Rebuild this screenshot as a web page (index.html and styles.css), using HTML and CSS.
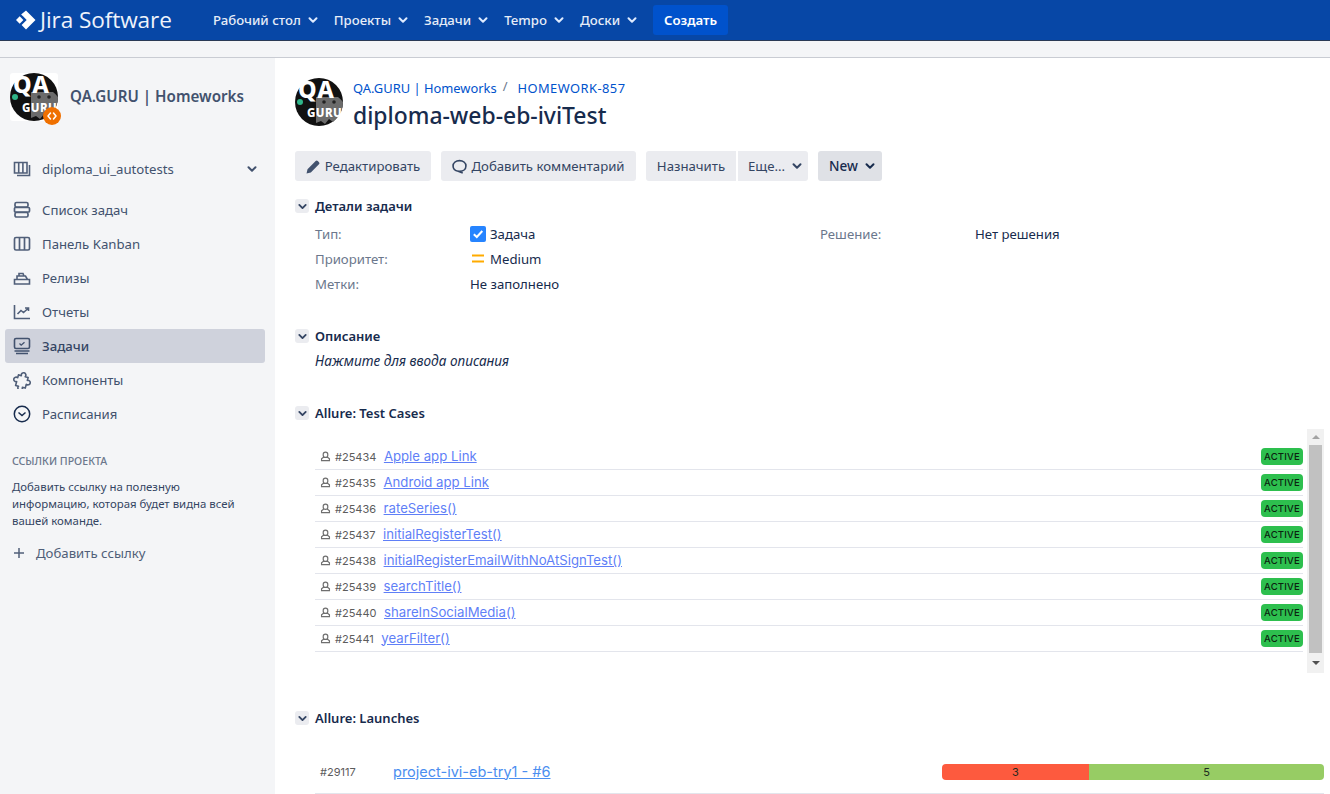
FILE: index.html
```html
<!DOCTYPE html>
<html lang="ru">
<head>
<meta charset="utf-8">
<title>diploma-web-eb-iviTest</title>
<link rel="stylesheet" href="styles.css">
</head>
<body>
<svg class="defs" width="0" height="0" aria-hidden="true">
  <symbol id="chev" viewBox="0 0 12 12">
    <path d="M2.500 4.200 6 7.700l3.500-3.500" fill="none" stroke="currentColor" stroke-width="2" stroke-linecap="round" stroke-linejoin="round"/>
  </symbol>
  <symbol id="person" viewBox="0 0 12 12">
    <path d="M3.500 3.800a2.500 2.500 0 0 1 5 0v.7a2.500 2.500 0 0 1-5 0zM3.800 6.800 1.700 8.400v2.100h8.600V8.400L8.200 6.800" fill="none" stroke="currentColor" stroke-width="1.300"/>
  </symbol>
</svg>

<header class="topbar">
  <a class="brand">
    <svg class="brand-mark" viewBox="0 0 20 20"><path d="M10 0.500 19.500 10 10 19.500 5.600 15.100 10.700 10 7.300 6.600 5.100 4.400z" fill="#fff"/><path d="M3.700 6.300 7.400 10 3.700 13.700 0 10z" fill="#fff"/></svg>
    <span class="brand-text">Jira Software</span>
  </a>
  <nav class="topnav">
    <a class="topnav-item">Рабочий стол<svg class="chev"><use href="#chev"/></svg></a>
    <a class="topnav-item">Проекты<svg class="chev"><use href="#chev"/></svg></a>
    <a class="topnav-item">Задачи<svg class="chev"><use href="#chev"/></svg></a>
    <a class="topnav-item">Tempo<svg class="chev"><use href="#chev"/></svg></a>
    <a class="topnav-item">Доски<svg class="chev"><use href="#chev"/></svg></a>
  </nav>
  <button class="create">Создать</button>
</header>
<div class="subbar"></div>

<div class="layout">
  <aside class="sidebar">
    <div class="project">
      <div class="project-logo">
        <svg class="qa-logo" viewBox="0 0 48 48">
          <circle cx="24" cy="24" r="24" fill="#111"/>
          <path d="M21 45V19h22a24 24 0 0 1 5 5 24 24 0 0 1-7 17l-3 3-4-3-4 5-4-3z" fill="#6b6b6b"/>
          <text x="3" y="19.500" class="logo-qa">QA</text>
          <text x="12" y="38.600" class="logo-guru">GURU</text>
          <circle cx="5" cy="24" r="3" fill="#2fb58a"/>
          <circle cx="29" cy="24" r="1.800" fill="#222"/>
          <circle cx="39" cy="24" r="1.800" fill="#222"/>
        </svg>
        <span class="project-badge"><svg viewBox="0 0 12 12"><path d="M4.500 3 2 6l2.500 3M7.500 3 10 6 7.500 9" fill="none" stroke="#fff" stroke-width="1.500" stroke-linecap="round" stroke-linejoin="round"/></svg></span>
      </div>
      <span class="project-name">QA.GURU | Homeworks</span>
    </div>

    <div class="board-select">
      <svg class="side-icon" viewBox="0 0 18 18"><path d="M1.500 2.500h12.500v10.500H1.500zM5.700 2.500v10.500M9.900 2.500v10.500M16.500 5v10.500H4" fill="none" stroke="#505f79" stroke-width="1.600"/></svg>
      <span class="board-name">diploma_ui_autotests</span>
      <svg class="chev board-chev"><use href="#chev"/></svg>
    </div>

    <ul class="side-nav">
      <li class="side-item">
        <svg class="side-icon" viewBox="0 0 18 18"><rect x="2" y="1.500" width="13" height="4.500" rx="1.500" fill="none" stroke="#505f79" stroke-width="1.700"/><rect x="1.500" y="6.500" width="15" height="4.500" rx="1" fill="none" stroke="#505f79" stroke-width="1.700"/><rect x="2" y="11.500" width="13" height="4.500" rx="1.500" fill="none" stroke="#505f79" stroke-width="1.700"/></svg>
        Список задач</li>
      <li class="side-item">
        <svg class="side-icon" viewBox="0 0 18 18"><rect x="1.500" y="2.500" width="15" height="12.500" rx="1.500" fill="none" stroke="#505f79" stroke-width="1.700"/><path d="M6.500 2.500V15M11.500 2.500V15" stroke="#505f79" stroke-width="1.700"/></svg>
        Панель Kanban</li>
      <li class="side-item">
        <svg class="side-icon" viewBox="0 0 18 18"><path d="M1.500 10.500h15v4.500h-15zM4 10.500V7h8.500l2 3.500M6 7V4.500h4L11 7" fill="none" stroke="#505f79" stroke-width="1.600"/></svg>
        Релизы</li>
      <li class="side-item">
        <svg class="side-icon" viewBox="0 0 18 18"><path d="M1.500 2v13.500h15.500" fill="none" stroke="#505f79" stroke-width="1.600"/><path d="M4.500 11 8 7.500l2.500 2L15 5.500M12 5h3.500v3" fill="none" stroke="#505f79" stroke-width="1.600"/></svg>
        Отчеты</li>
      <li class="side-item side-item-active">
        <svg class="side-icon" viewBox="0 0 18 18"><rect x="1.500" y="1.500" width="15" height="10" rx="1.500" fill="none" stroke="#42526e" stroke-width="1.600"/><path d="m6.500 6.500 1.700 1.700 3.300-3" fill="none" stroke="#42526e" stroke-width="1.300"/><path d="M1.500 14h15M3 16.500h12" stroke="#42526e" stroke-width="1.500"/></svg>
        Задачи</li>
      <li class="side-item">
        <svg class="side-icon side-icon-puzzle" viewBox="0 0 18 18"><path transform="rotate(15 9 10)" d="M4 5h3a2.300 2.300 0 1 1 4 0h3v3a2.300 2.300 0 1 1 0 4v4h-3a2.300 2.300 0 1 1-4 0H4v-4a2.300 2.300 0 1 1 0-4z" fill="none" stroke="#505f79" stroke-width="1.600" stroke-linejoin="round"/></svg>
        Компоненты</li>
      <li class="side-item">
        <svg class="side-icon" viewBox="0 0 18 18"><circle cx="9" cy="9" r="7.700" fill="none" stroke="#172b4d" stroke-width="1.500"/><path d="m5.500 7.500 3.500 3 3.500-3" fill="none" stroke="#172b4d" stroke-width="1.500"/></svg>
        Расписания</li>
    </ul>

    <h4 class="links-title">ССЫЛКИ ПРОЕКТА</h4>
    <p class="links-text">Добавить ссылку на полезную информацию, которая будет видна всей вашей команде.</p>
    <a class="add-link"><svg class="plus" viewBox="0 0 12 12"><path d="M6 1v10M1 6h10" stroke="#505f79" stroke-width="1.500"/></svg>Добавить ссылку</a>
  </aside>

  <main class="content">
    <div class="issue-head">
      <svg class="issue-avatar" viewBox="0 0 48 48">
        <circle cx="24" cy="24" r="24" fill="#111"/>
        <path d="M21 45V19h22a24 24 0 0 1 5 5 24 24 0 0 1-7 17l-3 3-4-3-4 5-4-3z" fill="#6b6b6b"/>
        <text x="3" y="19.500" class="logo-qa">QA</text>
        <text x="12" y="38.600" class="logo-guru">GURU</text>
        <circle cx="5" cy="24" r="3" fill="#2fb58a"/>
        <circle cx="29" cy="24" r="1.800" fill="#222"/>
        <circle cx="39" cy="24" r="1.800" fill="#222"/>
      </svg>
      <div class="issue-titles">
        <div class="crumbs"><a>QA.GURU | Homeworks</a><span class="crumb-sep">/</span><a class="crumb-key">HOMEWORK-857</a></div>
        <h1 class="issue-title">diploma-web-eb-iviTest</h1>
      </div>
    </div>

    <div class="toolbar">
      <button class="btn btn-edit"><svg class="btn-icon" viewBox="0 0 14 14"><path d="M.5 13.500l.9-4 7.600-7.600a1.400 1.400 0 0 1 2 0l1.100 1.100a1.400 1.400 0 0 1 0 2l-7.600 7.600z" fill="#42526e"/></svg>Редактировать</button>
      <button class="btn btn-comment"><svg class="btn-icon" viewBox="0 0 14 14"><path d="M7 1.500c3.300 0 6 2 6 5s-2.700 5-6 5h-.8l-.2 0L10 13l-4.200-1.600C3 11 1 9 1 6.500c0-3 2.700-5 6-5z" fill="none" stroke="#344563" stroke-width="1.500"/></svg>Добавить комментарий</button>
      <div class="btn-group">
        <button class="btn btn-assign">Назначить</button>
        <button class="btn btn-more">Еще...<svg class="chev"><use href="#chev"/></svg></button>
      </div>
      <button class="btn btn-status">New<svg class="chev"><use href="#chev"/></svg></button>
    </div>

    <section class="module module-details">
      <h3 class="mod-head"><span class="toggle"><svg class="chev"><use href="#chev"/></svg></span>Детали задачи</h3>
      <div class="details">
        <div class="detail"><span class="dt">Тип:</span><span class="dd"><svg class="type-icon" viewBox="0 0 16 16"><rect width="16" height="16" rx="2" fill="#2684ff"/><path d="m3.800 8.200 3 2.800 5.500-6" fill="none" stroke="#fff" stroke-width="2"/></svg>Задача</span></div>
        <div class="detail"><span class="dt">Решение:</span><span class="dd">Нет решения</span></div>
        <div class="detail"><span class="dt">Приоритет:</span><span class="dd"><svg class="prio-icon" viewBox="0 0 16 16"><path d="M2 4.500h12M2 10.500h12" stroke="#ffab00" stroke-width="2"/></svg>Medium</span></div>
        <div class="detail"></div>
        <div class="detail"><span class="dt">Метки:</span><span class="dd">Не заполнено</span></div>
      </div>
    </section>

    <section class="module module-desc">
      <h3 class="mod-head"><span class="toggle"><svg class="chev"><use href="#chev"/></svg></span>Описание</h3>
      <p class="desc">Нажмите для ввода описания</p>
    </section>

    <section class="module module-cases">
      <h3 class="mod-head"><span class="toggle"><svg class="chev"><use href="#chev"/></svg></span>Allure: Test Cases</h3>
      <div class="cases-wrap">
        <ul class="cases">
          <li class="case"><svg class="person"><use href="#person"/></svg><span class="case-id">#25434</span><a class="case-link">Apple app Link</a><span class="active">ACTIVE</span></li>
          <li class="case"><svg class="person"><use href="#person"/></svg><span class="case-id">#25435</span><a class="case-link">Android app Link</a><span class="active">ACTIVE</span></li>
          <li class="case"><svg class="person"><use href="#person"/></svg><span class="case-id">#25436</span><a class="case-link">rateSeries()</a><span class="active">ACTIVE</span></li>
          <li class="case"><svg class="person"><use href="#person"/></svg><span class="case-id">#25437</span><a class="case-link">initialRegisterTest()</a><span class="active">ACTIVE</span></li>
          <li class="case"><svg class="person"><use href="#person"/></svg><span class="case-id">#25438</span><a class="case-link">initialRegisterEmailWithNoAtSignTest()</a><span class="active">ACTIVE</span></li>
          <li class="case"><svg class="person"><use href="#person"/></svg><span class="case-id">#25439</span><a class="case-link">searchTitle()</a><span class="active">ACTIVE</span></li>
          <li class="case"><svg class="person"><use href="#person"/></svg><span class="case-id">#25440</span><a class="case-link">shareInSocialMedia()</a><span class="active">ACTIVE</span></li>
          <li class="case"><svg class="person"><use href="#person"/></svg><span class="case-id">#25441</span><a class="case-link">yearFilter()</a><span class="active">ACTIVE</span></li>
        </ul>
        <div class="scrollbar">
          <span class="arrow arrow-up"></span>
          <span class="thumb"></span>
          <span class="arrow arrow-down"></span>
        </div>
      </div>
    </section>

    <section class="module module-launches">
      <h3 class="mod-head"><span class="toggle"><svg class="chev"><use href="#chev"/></svg></span>Allure: Launches</h3>
      <div class="launch">
        <span class="launch-id">#29117</span>
        <a class="launch-link">project-ivi-eb-try1 - #6</a>
        <div class="bar"><span class="bar-red">3</span><span class="bar-green">5</span></div>
      </div>
    </section>
  </main>
</div>
</body>
</html>
```
FILE: styles.css
```css
* { box-sizing: border-box; }
html, body { margin: 0; padding: 0; height: 100%; overflow: hidden; }
body { font-family: "Noto Sans", "Open Sans", "Liberation Sans", sans-serif; font-size: 13.5px; color: #172b4d; background: #fff; line-height: 20px; }
.defs { position: absolute; }
button { font: inherit; border: 0; }
ul { list-style: none; margin: 0; padding: 0; }
h1, h3, h4, p { margin: 0; }
a { color: inherit; }
.chev { width: 12px; height: 12px; flex: none; }

.topbar { height: 41px; background: #0747a6; border-bottom: 1px solid #2a3a55; display: flex; align-items: center; color: #fff; padding-left: 16px; }
.brand { display: flex; align-items: center; gap: 4px; width: 197px; }
.brand-mark { width: 20px; height: 20px; flex: none; }
.brand-text { font-family: "Open Sans", sans-serif; font-size: 22.6px; font-weight: 400; letter-spacing: -.1px; color: #eef3fb; }
.topnav { display: flex; gap: 15px; }
.topnav-item { display: flex; align-items: center; gap: 6px; font-size: 13.2px; font-weight: 500; color: #e6edf8; }
.topnav-item .chev { color: #deebff; }
.create { margin-left: 15px; width: 75px; height: 30px; border-radius: 3px; background: #0052cc; color: #fff; font-weight: 600; font-size: 13.2px; padding: 0; }
.subbar { height: 17px; background: #f4f5f7; border-bottom: 1px solid #c9ccd3; }

.layout { display: flex; height: 736px; }
.sidebar { width: 275px; flex: none; background: #f4f5f7; padding: 15px 10px 0 5px; color: #42526e; }
.project { display: flex; align-items: center; gap: 12px; padding-left: 5px; height: 48px; }
.project-logo { position: relative; width: 48px; height: 48px; background: #fff; border-radius: 3px; flex: none; }
.qa-logo { width: 48px; height: 48px; display: block; overflow: visible; }
.project-badge { position: absolute; right: -3px; bottom: -4px; width: 18px; height: 18px; border-radius: 50%; background: #ef7000; display: flex; align-items: center; justify-content: center; }
.project-badge svg { width: 12px; height: 12px; }
.project-name { font-weight: 600; font-size: 15.2px; color: #42526e; padding-bottom: 2px; }
.logo-qa { font: 800 23.5px "Noto Sans", sans-serif; fill: #fff; letter-spacing: 1px; }
.logo-guru { font: 800 11.5px "Noto Sans", sans-serif; fill: #fff; letter-spacing: .4px; }

.board-select { display: flex; align-items: center; gap: 11px; height: 34px; margin-top: 31px; padding: 0 8px; font-size: 13.2px; color: #42526e; }
.board-name { flex: 1; }
.board-chev { color: #42526e; margin-right: -1px; }
.side-icon { width: 18px; height: 18px; flex: none; }

.side-nav { margin-top: 7px; }
.side-item { display: flex; align-items: center; gap: 11px; height: 34px; padding: 0 8px; border-radius: 3px; font-size: 13.2px; color: #42526e; }
.side-item-active { background: #cfd2dc; color: #344563; font-weight: 500; }

.links-title { margin: 22px 0 0 7px; font-size: 10.6px; font-weight: 500; color: #6b778c; line-height: 16px; }
.links-text { margin: 9px 0 0 7px; font-size: 11.4px; line-height: 17px; width: 240px; color: #344563; }
.add-link { display: flex; align-items: center; gap: 11px; margin: 14px 0 0 8px; font-size: 13.2px; color: #505f79; height: 20px; }
.plus { width: 12px; height: 12px; flex: none; }

.content { flex: 1; min-width: 0; padding: 20px 6px 0 20px; overflow: hidden; }
.issue-head { display: flex; gap: 10px; height: 48px; }
.issue-avatar { width: 48px; height: 48px; flex: none; overflow: visible; }
.crumbs { display: flex; color: #0052cc; font-size: 12.9px; line-height: 20px; }
.crumb-sep { color: #6b778c; margin: -2px 10px 0 6px; }
.crumb-key { letter-spacing: .45px; }
.issue-title { font-size: 22.9px; font-weight: 500; line-height: 28px; color: #172b4d; margin-top: 4px; }

.toolbar { display: flex; gap: 10px; margin-top: 25px; height: 30px; }
.btn { height: 30px; border-radius: 3px; background: #ebecf0; color: #344563; display: flex; align-items: center; justify-content: center; font-size: 13.2px; padding: 0; }
.btn-icon { width: 15px; height: 15px; flex: none; }
.btn-edit { width: 136px; gap: 4px; }
.btn-comment { width: 195px; gap: 4px; }
.btn-group { display: flex; gap: 2px; }
.btn-assign { width: 90px; border-radius: 3px 0 0 3px; }
.btn-more { width: 70px; gap: 6px; justify-content: flex-start; padding-left: 10px; border-radius: 0 3px 3px 0; }
.btn-status { width: 64px; gap: 6px; justify-content: flex-start; padding-left: 11px; background: #dfe1e6; font-weight: 500; color: #172b4d; font-size: 13.5px; }

.mod-head { display: flex; align-items: center; gap: 6px; font-size: 13px; font-weight: 600; color: #172b4d; line-height: 20px; height: 20px; }
.toggle { width: 14px; height: 14px; background: #ebecf0; border-radius: 3px; display: flex; align-items: center; justify-content: center; color: #344563; }
.toggle .chev { width: 11px; height: 11px; }

.module-details { margin-top: 15px; }
.details { display: grid; grid-template-columns: 505px 1fr; padding: 5px 0 0 20px; }
.detail { display: flex; height: 25px; align-items: center; font-size: 13.2px; }
.dt { width: 155px; color: #6b778c; flex: none; }
.dd { display: flex; align-items: center; color: #172b4d; }
.type-icon { width: 16px; height: 16px; margin-right: 4px; }
.prio-icon { width: 16px; height: 16px; margin-right: 4px; }

.module-desc { margin-top: 30px; }
.desc { margin: 5px 0 0 20px; font-style: italic; font-size: 13.6px; color: #172b4d; line-height: 20px; }

.module-cases { margin-top: 32px; }
.cases-wrap { display: flex; margin-top: 6px; height: 244px; padding-left: 20px; gap: 4px; }
.cases { flex: 1; min-width: 0; padding-top: 15px; }
.case { display: flex; align-items: center; height: 26px; border-bottom: 1px solid #e3e5ec; padding: 0 0 0 5px; }
.person { width: 11px; height: 11px; color: #6f6f6f; flex: none; }
.case-id { margin: 0 7.5px 0 4px; font-family: "Inter", sans-serif; font-size: 11px; color: #5c5c5c; flex: none; }
.case-link { font-family: "Inter", sans-serif; font-size: 13.2px; line-height: 18px; padding-bottom: 2px; color: #5f7ff7; text-decoration: underline; flex: 1; }
.active { width: 42px; height: 17px; line-height: 17px; text-align: center; background: #2dbf4e; color: #0b2210; border-radius: 4px; font-family: "Inter", sans-serif; font-size: 9.5px; font-weight: 500; letter-spacing: .2px; }

.scrollbar { width: 17px; flex: none; background: #f1f1f1; display: flex; flex-direction: column; align-items: center; }
.arrow { width: 0; height: 0; border-left: 4px solid transparent; border-right: 4px solid transparent; flex: none; }
.arrow-up { border-bottom: 4px solid #a3a3a3; margin: 6px 0; }
.arrow-down { border-top: 4px solid #505050; margin: 8px 0; }
.thumb { flex: 1; width: 13px; background: #c1c1c1; }

.module-launches { margin-top: 35px; }
.launch { display: flex; align-items: center; margin: 15px 0 0 20px; height: 51px; padding-top: 7px; border-bottom: 1px solid #e3e5ec; }
.launch-id { width: 78px; padding-left: 5px; font-family: "Inter", sans-serif; font-size: 11px; color: #5c5c5c; flex: none; }
.launch-link { font-family: "Inter", sans-serif; font-size: 14.5px; color: #4b8ef0; text-decoration: underline; flex: 1; }
.bar { width: 382px; height: 16px; display: flex; border-radius: 4px; overflow: hidden; font-family: "Inter", sans-serif; font-size: 11px; line-height: 16px; text-align: center; color: #1e2a1e; flex: none; }
.bar-red { flex: 147; background: #fd5a3e; }
.bar-green { flex: 235; background: #97cc64; }
```
